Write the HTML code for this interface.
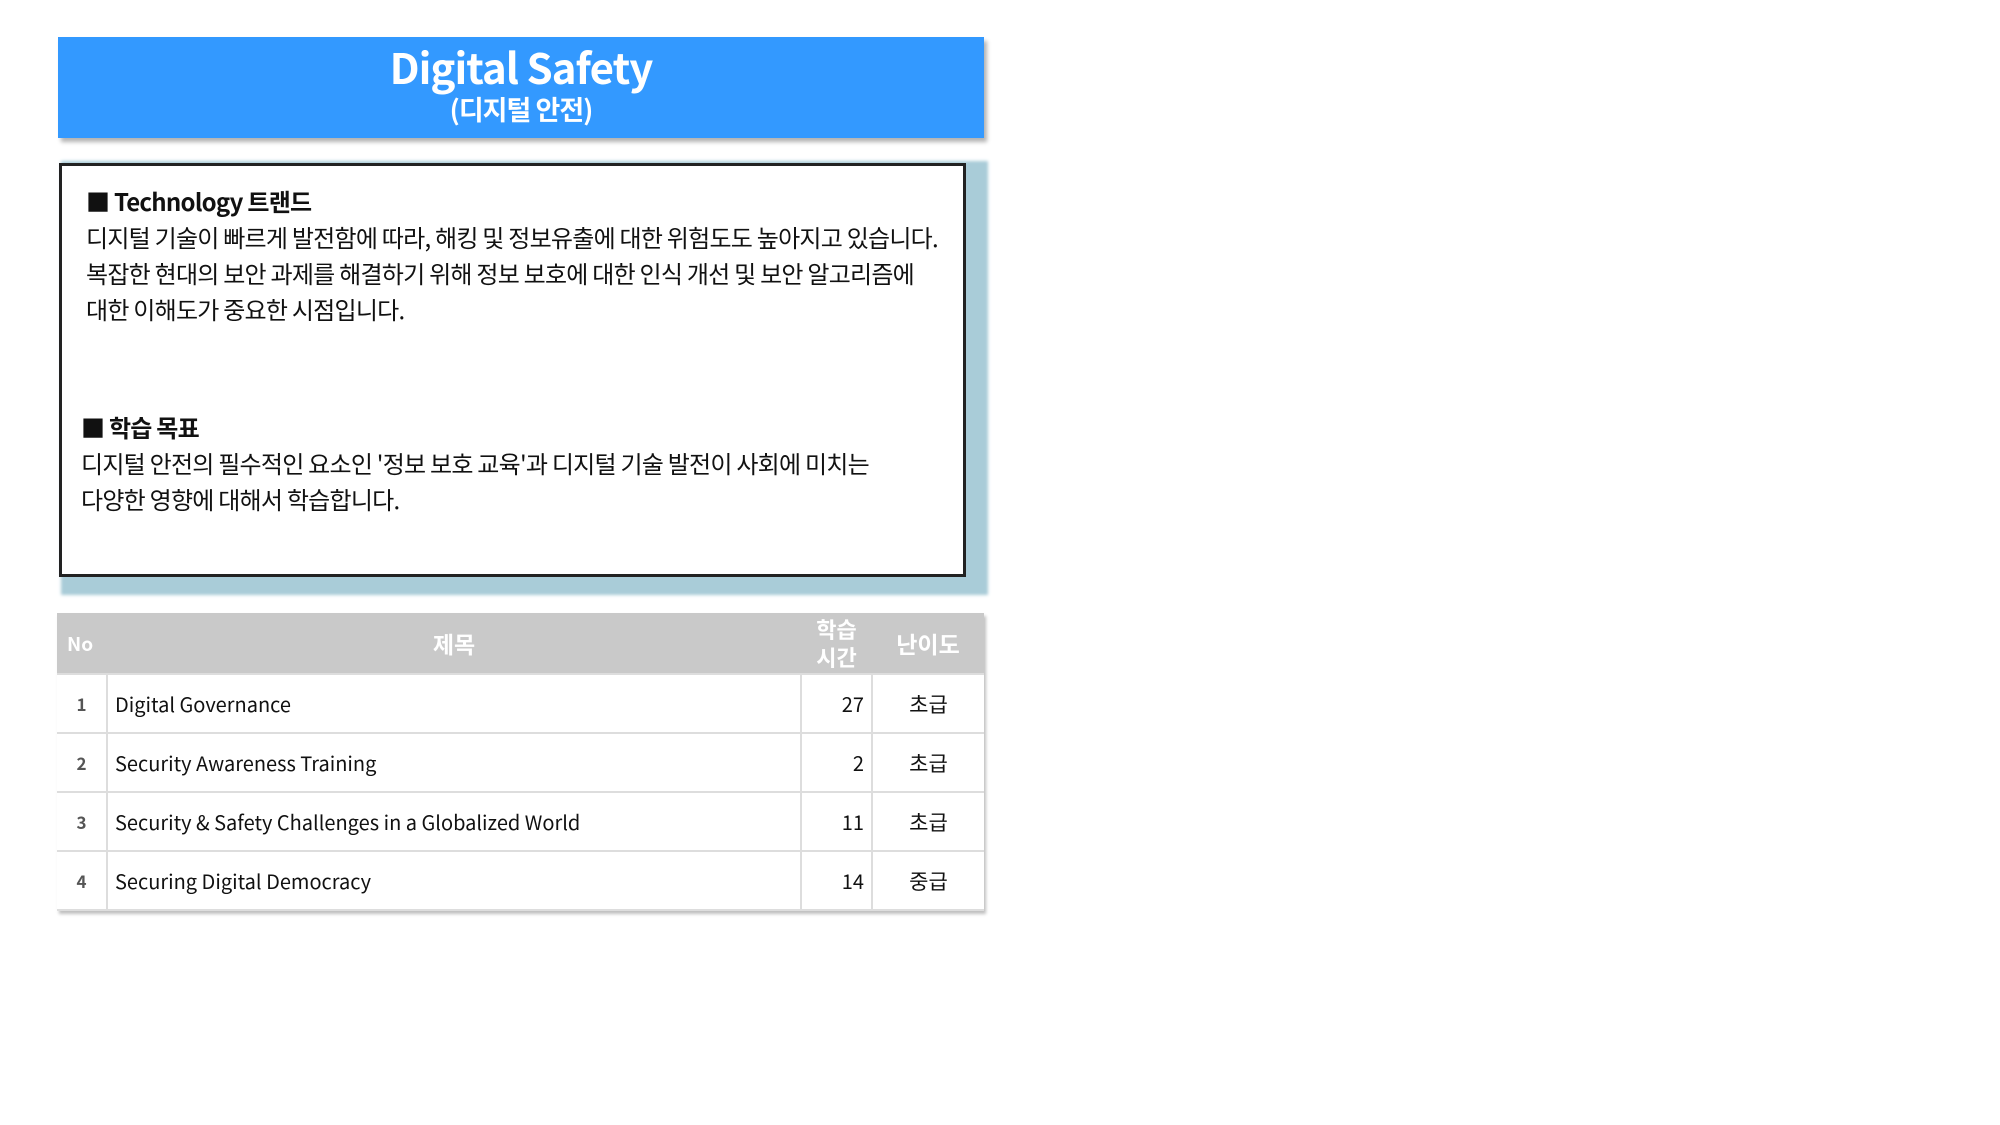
<!DOCTYPE html>
<html><head><meta charset="utf-8"><style>
*{margin:0;padding:0;box-sizing:border-box}
body{width:2000px;height:1125px;background:#fff;position:relative;overflow:hidden;font-family:"Liberation Sans","Noto Sans CJK KR",sans-serif}
.hdr{position:absolute;left:58px;top:37px;width:926px;height:101px;background:#3399ff;box-shadow:3px 4px 4px rgba(0,0,0,.3);color:#fff;text-align:center;font-family:"Noto Sans CJK KR",sans-serif;font-weight:bold}
.hdr .t{font-size:42px;line-height:50px;margin-top:5px;letter-spacing:-1px}
.hdr .s{font-size:27px;line-height:34px;letter-spacing:-1px}
.box{position:absolute;left:59px;top:163px;width:907px;height:414px;border:3px solid #222;background:#fff;box-shadow:12px 8px 3px 10px #a9ccd8;font-family:"Noto Sans CJK KR",sans-serif;color:#111}
.box p{position:absolute;white-space:nowrap;font-size:24px;line-height:36px;letter-spacing:-0.75px}
table{position:absolute;left:57px;top:613px;width:927px;border-collapse:collapse;box-shadow:2px 3px 3px rgba(0,0,0,.25);font-family:"Noto Sans CJK KR",sans-serif}
th{background:#c9c9c9;color:#fff;height:61px;font-weight:bold;font-size:23px}
td{height:59px;border:2px solid #ddd;font-size:20px;color:#111}
td:first-child{border-left:none;text-align:center;color:#555;font-size:17px;font-weight:bold}
td:last-child{border-right:none;text-align:center;font-size:21px}
</style></head><body>
<div class="hdr"><div class="t">Digital Safety</div><div class="s">(디지털 안전)</div></div>
<div class="box">
<p style="left:24px;top:17px;font-weight:bold">■ Technology 트랜드</p>
<p style="left:24px;top:53px">디지털 기술이 빠르게 발전함에 따라, 해킹 및 정보유출에 대한 위험도도 높아지고 있습니다.</p>
<p style="left:24px;top:89px">복잡한 현대의 보안 과제를 해결하기 위해 정보 보호에 대한 인식 개선 및 보안 알고리즘에</p>
<p style="left:24px;top:125px">대한 이해도가 중요한 시점입니다.</p>
<p style="left:19px;top:243px;font-weight:bold">■ 학습 목표</p>
<p style="left:19px;top:279px">디지털 안전의 필수적인 요소인 '정보 보호 교육'과 디지털 기술 발전이 사회에 미치는</p>
<p style="left:19px;top:315px">다양한 영향에 대해서 학습합니다.</p>
</div>
<table>
<tr><th style="width:50px;font-size:19px;text-align:left;padding-left:10px">No</th><th style="width:694px">제목</th><th style="width:71px;line-height:28px;font-size:22px">학습<br>시간</th><th>난이도</th></tr>
<tr><td>1</td><td style="padding-left:7px">Digital Governance</td><td style="text-align:right;padding-right:7px">27</td><td>초급</td></tr>
<tr><td>2</td><td style="padding-left:7px">Security Awareness Training</td><td style="text-align:right;padding-right:7px">2</td><td>초급</td></tr>
<tr><td>3</td><td style="padding-left:7px">Security &amp; Safety Challenges in a Globalized World</td><td style="text-align:right;padding-right:7px">11</td><td>초급</td></tr>
<tr><td>4</td><td style="padding-left:7px">Securing Digital Democracy</td><td style="text-align:right;padding-right:7px">14</td><td>중급</td></tr>
</table>
</body></html>
